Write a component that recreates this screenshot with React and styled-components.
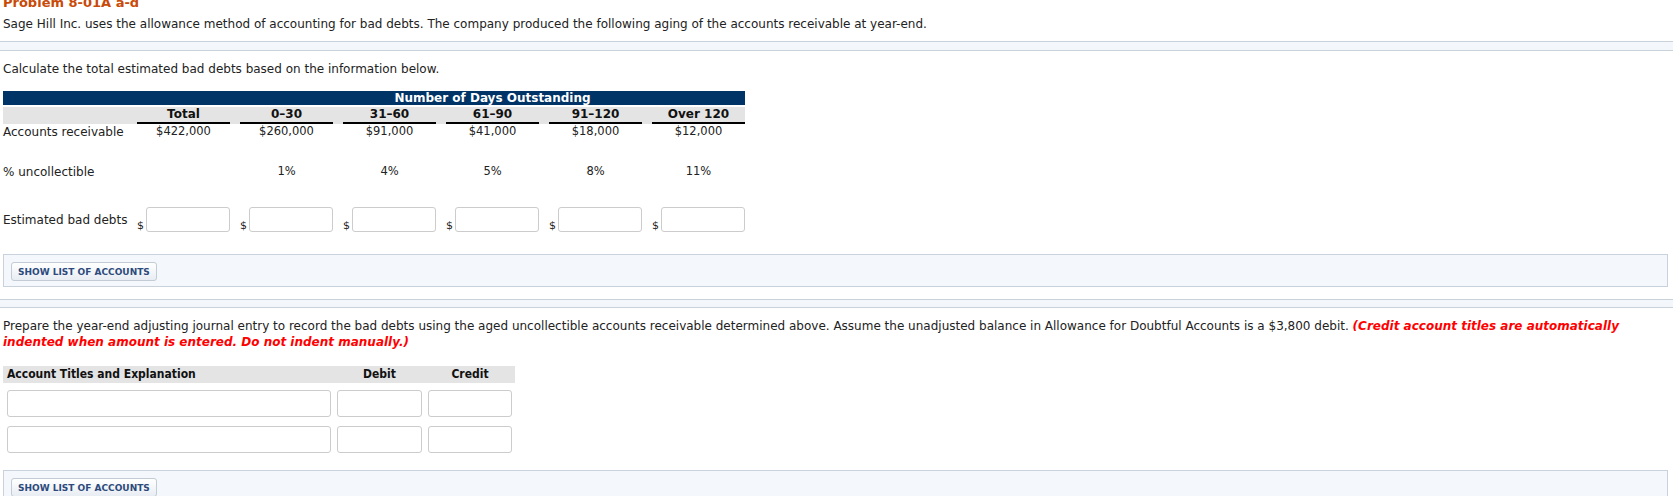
import React from "react";
import styled, { createGlobalStyle } from "styled-components";

const GlobalStyle = createGlobalStyle`
  body {
    margin: 0;
    background: #fff;
    font-family: "DejaVu Sans", Verdana, sans-serif;
    font-size: 12px;
    color: #222;
  }
`;

const Heading = styled.h3`
  margin: -5px 0 0 3px;
  font-size: 13px;
  line-height: 16px;
  font-weight: bold;
  color: #c94a08;
`;

const Para = styled.p`
  margin: ${(p) => p.$top || 0}px 0 0 3px;
  line-height: 16px;
`;

const Warn = styled.em`
  color: #f00;
  font-weight: bold;
`;

const Separator = styled.div`
  margin-top: ${(p) => p.$top}px;
  height: ${(p) => p.$height}px;
  box-sizing: border-box;
  border-top: 1px solid #c9d1da;
  border-bottom: 1px solid #c9d1da;
  background: #f3f7fb;
`;

const Aging = styled.div`
  margin: 14px 0 0 3px;
  width: 742px;
`;

const GridRow = styled.div`
  display: grid;
  grid-template-columns: 124px repeat(6, 93px);
  column-gap: 10px;
  margin-top: ${(p) => p.$top || 0}px;
  align-items: center;
`;

const NavyRow = styled(GridRow)`
  background: #003366;
  color: #fff;
  font-weight: bold;
  height: 14px;
  line-height: 14px;
`;

const NavyTitle = styled.div`
  grid-column: 3 / -1;
  text-align: center;
  font-size: 12px;
`;

const HeadRow = styled(GridRow)`
  margin-top: 2px;
  background: #e4e4e4;
  align-items: end;
`;

const HeadCell = styled.div`
  height: 15px;
  line-height: 15px;
  text-align: center;
  font-weight: bold;
  font-size: 12px;
  color: #111;
  border-bottom: 2px solid #000;
`;

const Label = styled.div`
  line-height: 16px;
  white-space: nowrap;
`;

const Value = styled.div`
  text-align: center;
  line-height: 16px;
  font-size: 11.5px;
  margin-top: ${(p) => (p.$up ? -3 : 0)}px;
`;

const MoneyCell = styled.div`
  display: flex;
  align-items: flex-end;
  gap: 1px;
`;

const Dollar = styled.span`
  width: 8px;
  line-height: 12px;
  font-size: 11px;
`;

const Field = styled.div`
  box-sizing: border-box;
  width: ${(p) => p.$w}px;
  height: ${(p) => p.$h}px;
  border: 1px solid #ccc;
  border-radius: 3px;
  background: #fff;
`;

const Panel = styled.div`
  margin: ${(p) => p.$top}px 5px 0 3px;
  padding: 7px 7px 5px;
  border: 1px solid #c9d1da;
  background: #f4f7fb;
`;

const AccountsButton = styled.button`
  display: block;
  box-sizing: border-box;
  height: 19px;
  padding: 0 6px;
  border: 1px solid #c3cbd5;
  border-radius: 3px;
  background: linear-gradient(#ffffff, #e8edf3);
  color: #2d4a7c;
  font-family: "DejaVu Sans", Verdana, sans-serif;
  font-size: 9px;
  font-weight: bold;
`;

const Journal = styled.div`
  margin: 16px 0 0 3px;
  width: 512px;
`;

const JournalGrid = styled.div`
  display: grid;
  grid-template-columns: 324px 85px 84px;
  column-gap: 6px;
  padding-left: 4px;
  margin-top: ${(p) => p.$top || 0}px;
`;

const JournalHead = styled(JournalGrid)`
  background: #e4e4e4;
  height: 17px;
  line-height: 17px;
  font-family: "DejaVu Sans Condensed", "DejaVu Sans", sans-serif;
  font-weight: bold;
  font-size: 12px;
  color: #111;
`;

const JournalHeadCell = styled.div`
  text-align: ${(p) => (p.$center ? "center" : "left")};
`;

const columns = ["Total", "0\u201330", "31\u201360", "61\u201390", "91\u2013120", "Over 120"];
const receivables = ["$422,000", "$260,000", "$91,000", "$41,000", "$18,000", "$12,000"];
const rates = ["", "1%", "4%", "5%", "8%", "11%"];

export default function App() {
  return (
    <>
      <GlobalStyle />
      <Heading>Problem 8-01A a-d</Heading>
      <Para $top={5}>
        Sage Hill Inc. uses the allowance method of accounting for bad debts. The company produced the following aging of the accounts receivable at year-end.
      </Para>
      <Separator $top={9} $height={10} />

      <Para $top={10}>Calculate the total estimated bad debts based on the information below.</Para>

      <Aging>
        <NavyRow>
          <NavyTitle>Number of Days Outstanding</NavyTitle>
        </NavyRow>
        <HeadRow>
          <div />
          {columns.map((c) => (
            <HeadCell key={c}>{c}</HeadCell>
          ))}
        </HeadRow>
        <GridRow>
          <Label>Accounts receivable</Label>
          {receivables.map((v) => (
            <Value key={v} $up>{v}</Value>
          ))}
        </GridRow>
        <GridRow $top={24}>
          <Label>% uncollectible</Label>
          {rates.map((v, i) => (
            <Value key={i} $up>{v}</Value>
          ))}
        </GridRow>
        <GridRow $top={27}>
          <Label>Estimated bad debts</Label>
          {columns.map((c) => (
            <MoneyCell key={c}>
              <Dollar>$</Dollar>
              <Field $w={84} $h={25} />
            </MoneyCell>
          ))}
        </GridRow>
      </Aging>

      <Panel $top={22}>
        <AccountsButton>SHOW LIST OF ACCOUNTS</AccountsButton>
      </Panel>

      <Separator $top={12} $height={9} />

      <Para $top={10}>
        Prepare the year-end adjusting journal entry to record the bad debts using the aged uncollectible accounts receivable determined above. Assume the unadjusted balance in Allowance for Doubtful Accounts is a $3,800 debit.{" "}
        <Warn>
          (Credit account titles are automatically
          <br />
          indented when amount is entered. Do not indent manually.)
        </Warn>
      </Para>

      <Journal>
        <JournalHead>
          <JournalHeadCell>Account Titles and Explanation</JournalHeadCell>
          <JournalHeadCell $center>Debit</JournalHeadCell>
          <JournalHeadCell $center>Credit</JournalHeadCell>
        </JournalHead>
        {[7, 9].map((top) => (
          <JournalGrid key={top} $top={top}>
            <Field $w={324} $h={27} />
            <Field $w={85} $h={27} />
            <Field $w={84} $h={27} />
          </JournalGrid>
        ))}
      </Journal>

      <Panel $top={17}>
        <AccountsButton>SHOW LIST OF ACCOUNTS</AccountsButton>
      </Panel>
    </>
  );
}
